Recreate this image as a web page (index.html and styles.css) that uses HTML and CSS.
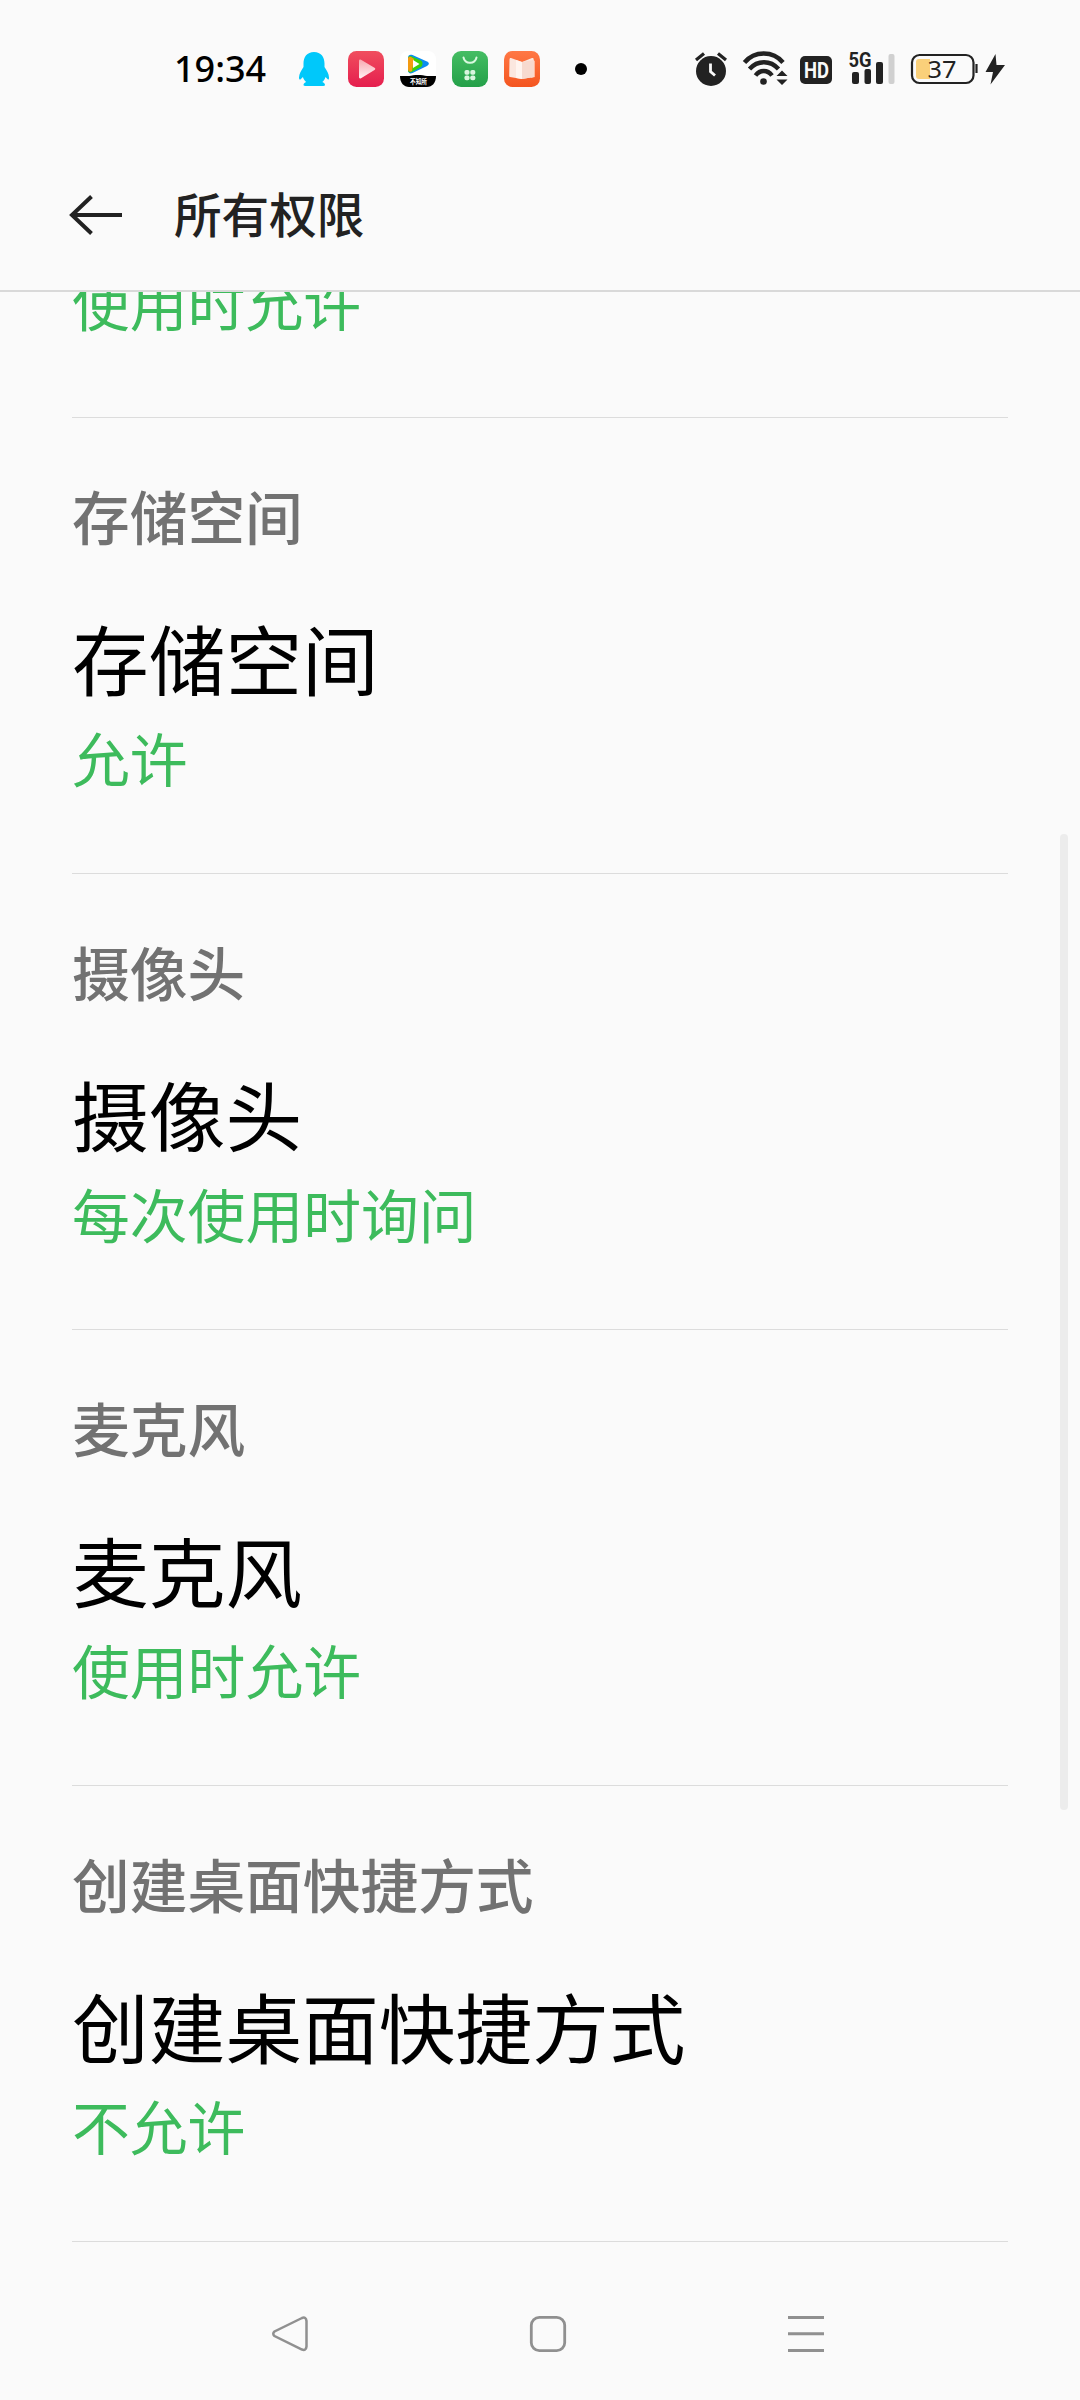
FILE: index.html
```html
<!DOCTYPE html>
<html lang="zh-CN">
<head>
<meta charset="utf-8">
<title>所有权限</title>
<link rel="stylesheet" href="styles.css">
</head>
<body>
<div class="screen">
  <div class="status">
    <span class="clock">19:34</span>
    <div class="apps">
      <svg width="36" height="40" viewBox="296 49 36 40"><path fill="#00c8fa" d="M314 52c-7 0-10.500 5-10.500 11.500v3.500c-2 3-4.500 7-4.500 10.500 0 2 .8 2.400 1.700 1.700l2.200-2.200c.6 2 1.700 3.700 3.300 5-1.600.6-2.700 1.600-2.700 3 0 .8 1 1 3 1h15.500c2 0 3-.3 3-1 0-1.400-1.100-2.400-2.700-3 1.600-1.300 2.600-3 3.200-5l2.200 2.200c.9.7 1.300.2 1.300-1.700 0-3.500-2.500-7.500-4.500-10.500V63.500C324.500 57 321 52 314 52z"/></svg>
      <svg width="36" height="40" viewBox="348 49 36 40"><defs><linearGradient id="red" x2="0" y2="1"><stop stop-color="#f04e5e"/><stop offset="1" stop-color="#e51e4e"/></linearGradient><linearGradient id="tri" x2="0" y2="1"><stop stop-color="#f9a9b1"/><stop offset="1" stop-color="#fff1f3"/></linearGradient></defs><rect x="348" y="51" width="36" height="36" rx="8.500" fill="url(#red)"/><path d="M359 61c0-1.300.8-1.800 2-1.200l13.500 8c1 .6 1 1.600 0 2.200l-13.500 8.200c-1.200.6-2 .1-2-1.200z" fill="url(#tri)"/></svg>
      <svg width="36" height="40" viewBox="400 49 36 40"><rect x="400" y="51" width="36" height="36" rx="8" fill="#fff"/><path d="M408 58c0-3 2-4 4.500-3l14.500 6.500c2.500 1.200 2.500 3 0 4.400L412.500 73c-2.500 1-4.500 0-4.500-3z" fill="#0a8df0"/><path d="M408 59c0-3 2-3.500 4-2.500l9 4c2 1 2 5 0 6.500l-9 5c-2 1-4 .5-4-2z" fill="#38d00e"/><path d="M408 58c.5-1.500 2-1.600 3-1l3 2-2 12c-2 1.500-4 .5-4-2z" fill="#f39b12"/><path d="M413 60l6.500 4-6.500 4z" fill="#fff"/><path d="M400 76h36c0 7-4 11-9 11h-18c-5 0-9-4-9-11z" fill="#000"/><path d="M409 76c5-1.500 13-1.500 18 0z"/><text x="410" y="84" class="label-video" textLength="17" lengthAdjust="spacingAndGlyphs">不知所</text></svg>
      <svg width="36" height="40" viewBox="452 49 36 40"><defs><linearGradient id="green" x2="0" y2="1"><stop stop-color="#45bd63"/><stop offset="1" stop-color="#24a049"/></linearGradient></defs><rect x="452" y="51" width="36" height="36" rx="9" fill="url(#green)"/><path d="M463.500 57.500c1.500 7 11.500 7 13 0" fill="none" stroke="#d9f8df" stroke-width="2" stroke-linecap="round"/><g fill="#d9f5df"><rect x="464.500" y="70" width="5" height="4.700" rx="1.800"/><rect x="470.300" y="70" width="5" height="4.700" rx="1.800"/><rect x="464.500" y="75.500" width="5" height="4.700" rx="1.800"/><rect x="470.300" y="75.500" width="5" height="4.700" rx="1.800"/></g></svg>
      <svg width="36" height="40" viewBox="504 49 36 40"><defs><linearGradient id="org" x2="0" y2="1"><stop stop-color="#ff7845"/><stop offset="1" stop-color="#f4551f"/></linearGradient></defs><rect x="504" y="51" width="36" height="36" rx="8.500" fill="url(#org)"/><path d="M533 60l2 1v16l-4 1z" fill="#ffb79b"/><path d="M509.500 59.500c0-1 .5-1.800 1.500-1.500l11 4 10-4c1.200-.3 1.700.3 1.700 1.500V77l-11.700 2-12-2c-.5 0-.8-.4-.8-1z" fill="#fbe7df"/><path d="M522 62v17l-6-1V60z" fill="#fff4ef"/><path d="M522 62v17l11.500-2V60z" fill="#f7dacf"/></svg>
      <svg width="50" height="40" viewBox="556 49 50 40"><circle cx="581" cy="69" r="6"/></svg>
    </div>
    <div class="indicators">
      <svg width="37" height="40" viewBox="694 49 37 40"><circle cx="711" cy="71" r="15" fill="#222"/><path d="M696 60l8-6.500M718 53.500l8 6.500" stroke="#222" stroke-width="3.200"/><path d="M710.500 63.500v8l4.500 4" fill="none" stroke="#fafafa" stroke-width="2.800"/></svg>
      <svg width="49" height="40" viewBox="741 49 49 40"><g fill="none" stroke="#222" stroke-width="4.400"><path d="M744.500 62.500c10-12 28.500-12 38.500 0"/><path d="M749.500 69c8-9 21-9 29 0"/><path d="M755.500 75.500c4.500-6 12-6 16.500 0"/></g><circle cx="763.500" cy="81.500" r="3.300" fill="#222"/><path d="M776.500 76l5.500-5.500 5.500 5.500zM776.500 79.500l5.500 5.500 5.500-5.500z" fill="#222"/></svg>
      <svg width="34" height="40" viewBox="800 49 34 40"><rect x="800" y="56" width="32" height="28" rx="5" fill="#222"/><text x="804" y="78" class="label-hd" textLength="25" lengthAdjust="spacingAndGlyphs">HD</text></svg>
      <svg width="53" height="40" viewBox="844 49 53 40"><text x="848.500" y="67" class="label-5g" textLength="23" lengthAdjust="spacingAndGlyphs">5G</text><g fill="#222"><rect x="852" y="72" width="7" height="12" rx="2"/><rect x="864.500" y="69" width="6.500" height="15" rx="2"/><rect x="876" y="62" width="7" height="22" rx="2"/></g><rect x="888.500" y="54" width="6" height="30" rx="2" fill="#d0d0d0"/></svg>
      <svg width="100" height="40" viewBox="907 49 100 40"><rect x="912" y="55" width="61.500" height="28" rx="7.500" fill="none" stroke="#222" stroke-width="2.200"/><path d="M916 62q0-3 3-3h11v20h-11q-3 0-3-3z" fill="#fad07a"/><path d="M976.500 64v9" stroke="#222" stroke-width="2.200"/><text x="927.500" y="78" class="label-batt" textLength="29" lengthAdjust="spacingAndGlyphs">37</text><path d="M995.500 54L985.500 72h7.500l-2.500 12.500L1005 65h-8.500z" fill="#222"/></svg>
    </div>
  </div>
  <header class="bar">
    <svg class="back" width="54" height="42" viewBox="69 194 54 42"><path d="M122 215H72M91.500 196.500L72 215l19.500 18.500" fill="none" stroke="#222" stroke-width="4"/></svg>
    <h1>所有权限</h1>
  </header>
  <main class="list">
    <section class="item item-cut"><p class="state">使用时允许</p></section>
    <section class="item"><h2>存储空间</h2><p class="name">存储空间</p><p class="state">允许</p></section>
    <section class="item"><h2>摄像头</h2><p class="name">摄像头</p><p class="state">每次使用时询问</p></section>
    <section class="item"><h2>麦克风</h2><p class="name">麦克风</p><p class="state">使用时允许</p></section>
    <section class="item"><h2>创建桌面快捷方式</h2><p class="name">创建桌面快捷方式</p><p class="state">不允许</p></section>
    <div class="scrollbar"></div>
  </main>
  <nav class="nav">
    <svg width="40" height="40" viewBox="270 2314 40 40"><path d="M302 2318L274.500 2331.500q-2.500 2.200 0 4.500L302 2349.500q4 1.500 4.500-3V2321q-.5-4.500-4.500-3z" fill="none" stroke="#909090" stroke-width="2.500"/></svg>
    <svg width="40" height="40" viewBox="528 2314 40 40"><rect x="531.300" y="2317.300" width="33.400" height="33.400" rx="8" fill="none" stroke="#909090" stroke-width="2.800"/></svg>
    <svg width="40" height="40" viewBox="786 2314 40 40"><path d="M788 2317.500h36M788 2333.800h36M788 2350.500h36" stroke="#909090" stroke-width="3"/></svg>
  </nav>
</div>
</body>
</html>
```
FILE: styles.css
```css
* { box-sizing: border-box; }
body, h1, h2, p { margin: 0; }
body {
  background: #fafafa;
  font-family: "Noto Sans CJK SC", sans-serif;
  color: #000;
}
svg { display: block; flex: none; }
.screen {
  width: 1080px;
  height: 2400px;
  display: flex;
  flex-direction: column;
  overflow: hidden;
}
.status {
  height: 138px;
  display: flex;
  align-items: center;
  padding: 0 73px 0 174px;
}
.clock {
  width: 122px;
  padding-bottom: 1px;
  font: 500 36px/44px "Noto Sans", sans-serif;
}
.apps { display: flex; gap: 16px; }
.indicators { display: flex; gap: 10px; margin-left: auto; }
.label-video { font-size: 7px; font-weight: 700; fill: #fff; }
.label-hd { font: 700 22px "Roboto", sans-serif; fill: #fafafa; }
.label-5g { font: 700 21px "Roboto", sans-serif; fill: #222; }
.label-batt { font: 400 24px "Noto Sans", sans-serif; fill: #222; }
.bar {
  height: 154px;
  display: flex;
  align-items: center;
  gap: 51px;
  padding: 1px 69px 0;
  border-bottom: 2px solid #d9d9d9;
}
.bar h1 {
  padding-bottom: 4px;
  font-size: 47.6px;
  font-weight: 500;
  line-height: 72px;
  color: #222;
}
.list {
  position: relative;
  height: 1959px;
  padding: 0 72px;
  overflow: hidden;
}
.item {
  height: 456px;
  padding-top: 57px;
  border-bottom: 1px solid #dcdcdc;
}
.item-cut {
  display: flow-root;
  height: 126px;
  padding-top: 0;
}
.item-cut .state { margin-top: -31px; }
.item h2 {
  font-size: 57.7px;
  font-weight: 500;
  line-height: 80px;
  color: #727272;
}
.name {
  margin-top: 52px;
  font-size: 76.7px;
  line-height: 100px;
}
.state {
  margin-top: 10px;
  font-size: 57.8px;
  line-height: 80px;
  color: #3dbb5c;
}
.scrollbar {
  position: absolute;
  top: 542px;
  right: 12px;
  width: 8px;
  height: 976px;
  border-radius: 4px;
  background: #ececec;
}
.nav {
  flex: 1;
  display: flex;
  gap: 218px;
  padding: 63px 0 0 270px;
}
```
